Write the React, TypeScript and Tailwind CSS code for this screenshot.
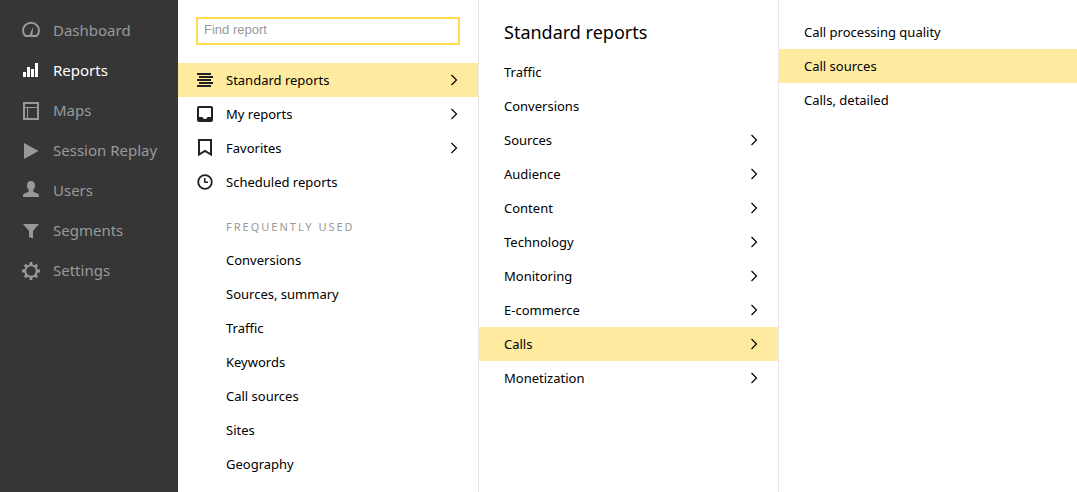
import type { ReactNode } from 'react'

type NavItem = { label: string; icon: ReactNode; active?: boolean }
type MenuItem = { label: string; icon?: ReactNode; submenu?: boolean; active?: boolean }

const navItems: NavItem[] = [
  {
    label: 'Dashboard',
    icon: (
      <>
        <path
          d="M3.500 15C1.900 13.600 1 11.600 1 9.500a8 7.700 0 0 1 16 0c0 2.100-.9 4.100-2.500 5.500Z"
          fill="none"
          stroke="currentColor"
          strokeWidth="2"
          strokeLinejoin="round"
        />
        <path d="M11.300 5.500 10.300 15H7Z" />
      </>
    ),
  },
  { label: 'Reports', active: true, icon: <path d="M1 11h3v5H1zM5 6h3v10H5zM9 8h3v8H9zM13 2h3v14h-3z" /> },
  {
    label: 'Maps',
    icon: <path fillRule="evenodd" d="M1 1h16v18H1zM3 3v3h12V3zM3 7v10h2V7zM6 7v10h9V7z" />,
  },
  { label: 'Session Replay', icon: <path d="M2 2 16.500 10 2 18Z" /> },
  {
    label: 'Users',
    icon: (
      <path d="M9 0c2.700 0 4 1.800 4 4.200 0 2-.6 3.400-1.700 4.600v1.700c.4.900 4 1.400 5 2.600.6.700.7 1.700.7 2.900H1c0-1.200.1-2.200.7-2.900 1-1.200 4.600-1.700 5-2.600V8.800C5.600 7.600 5 6.200 5 4.200 5 1.800 6.300 0 9 0Z" />
    ),
  },
  { label: 'Segments', icon: <path d="M1 3h16l-6 7v7.500L7 16v-6Z" /> },
  {
    label: 'Settings',
    icon: (
      <>
        <circle cx="9" cy="10" r="5.800" fill="none" stroke="currentColor" strokeWidth="2" />
        <path
          d="M9 1v3M9 16v3M0 10h3M15 10h3M2.800 3.800l2 2M13.200 14.200l2 2M2.800 16.200l2-2M13.200 5.800l2-2"
          stroke="currentColor"
          strokeWidth="2.800"
        />
      </>
    ),
  },
]

const reportGroups: MenuItem[] = [
  {
    label: 'Standard reports',
    submenu: true,
    active: true,
    icon: <path d="M0 1h14v2H0zM2 4h14v2H2zM0 7h14v2H0zM2 10h14v2H2zM0 13h14v2H0z" />,
  },
  {
    label: 'My reports',
    submenu: true,
    icon: (
      <path
        fillRule="evenodd"
        d="M2 0h12a2 2 0 0 1 2 2v12a2 2 0 0 1-2 2H2a2 2 0 0 1-2-2V2a2 2 0 0 1 2-2ZM2 2v9h3.500c.3 1.200 1.300 2 2.500 2s2.200-.8 2.500-2H14V2Z"
      />
    ),
  },
  {
    label: 'Favorites',
    submenu: true,
    icon: <path d="M2 0v14.500L8 11l6 3.500V0Z" fill="none" stroke="currentColor" strokeWidth="2" />,
  },
  {
    label: 'Scheduled reports',
    icon: (
      <>
        <circle cx="8" cy="8" r="6.800" fill="none" stroke="currentColor" strokeWidth="1.800" />
        <path d="M7.800 4v4.300H11" fill="none" stroke="currentColor" strokeWidth="1.500" />
      </>
    ),
  },
]

const frequentlyUsed: MenuItem[] = [
  { label: 'Conversions' },
  { label: 'Sources, summary' },
  { label: 'Traffic' },
  { label: 'Keywords' },
  { label: 'Call sources' },
  { label: 'Sites' },
  { label: 'Geography' },
]

const standardReports: MenuItem[] = [
  { label: 'Traffic' },
  { label: 'Conversions' },
  { label: 'Sources', submenu: true },
  { label: 'Audience', submenu: true },
  { label: 'Content', submenu: true },
  { label: 'Technology', submenu: true },
  { label: 'Monitoring', submenu: true },
  { label: 'E-commerce', submenu: true },
  { label: 'Calls', submenu: true, active: true },
  { label: 'Monetization', submenu: true },
]

const callReports: MenuItem[] = [
  { label: 'Call processing quality' },
  { label: 'Call sources', active: true },
  { label: 'Calls, detailed' },
]

function Chevron() {
  return (
    <svg viewBox="0 0 8 12" className="ml-auto h-3 w-2" fill="none" stroke="currentColor" strokeWidth="1.200" aria-hidden="true">
      <path d="M1.500 1l5 5-5 5" />
    </svg>
  )
}

function MenuList({ items, inset }: { items: MenuItem[]; inset: string }) {
  return (
    <ul>
      {items.map((item) => (
        <li key={item.label}>
          <a
            href="#"
            aria-current={item.active ? 'true' : undefined}
            className={`flex h-[34px] items-center pr-5 ${inset} ${item.active ? 'bg-[#ffeba0]' : ''}`}
          >
            {item.icon && (
              <svg viewBox="0 0 16 16" className="mr-[13px] size-4 overflow-visible text-[#222]" fill="currentColor" aria-hidden="true">
                {item.icon}
              </svg>
            )}
            {item.label}
            {item.submenu && <Chevron />}
          </a>
        </li>
      ))}
    </ul>
  )
}

export default function App() {
  return (
    <div className="flex min-h-screen bg-white font-['Noto_Sans',sans-serif] text-[13px] leading-5 text-black">
      <nav aria-label="Main" className="w-[178px] shrink-0 bg-[#363636] pt-[10px] text-[15px]">
        <ul>
          {navItems.map((item) => (
            <li key={item.label}>
              <a
                href="#"
                aria-current={item.active ? 'page' : undefined}
                className={`flex h-10 items-center gap-[13px] pl-[22px] ${item.active ? 'text-white' : 'text-[#999]'}`}
              >
                <svg viewBox="0 0 18 18" className="size-[18px] overflow-visible" fill="currentColor" aria-hidden="true">
                  {item.icon}
                </svg>
                {item.label}
              </a>
            </li>
          ))}
        </ul>
      </nav>

      <section aria-label="Reports" className="w-[300px] shrink-0 pt-[17px]">
        <div className="mb-[18px] px-[18px]">
          <input
            type="search"
            aria-label="Find report"
            placeholder="Find report"
            className="block h-7 w-full border-2 border-[#ffdb4d] px-1.5 pb-1 font-['Liberation_Sans',sans-serif] text-[13px] outline-none placeholder:text-[#999]"
          />
        </div>
        <MenuList items={reportGroups} inset="pl-[19px]" />
        <h2 className="mt-[18px] mb-[6px] pl-12 text-[11px] tracking-[2px] text-[#999] uppercase">Frequently used</h2>
        <MenuList items={frequentlyUsed} inset="pl-12" />
      </section>

      <section aria-label="Standard reports" className="w-[300px] shrink-0 border-l border-[#e8e8e8] pt-5">
        <h1 className="mb-[11px] pl-[25px] text-[18px] leading-6">Standard reports</h1>
        <MenuList items={standardReports} inset="pl-[25px]" />
      </section>

      <section aria-label="Calls" className="min-w-0 flex-1 border-l border-[#e8e8e8] pt-[15px]">
        <MenuList items={callReports} inset="pl-[25px]" />
      </section>
    </div>
  )
}
